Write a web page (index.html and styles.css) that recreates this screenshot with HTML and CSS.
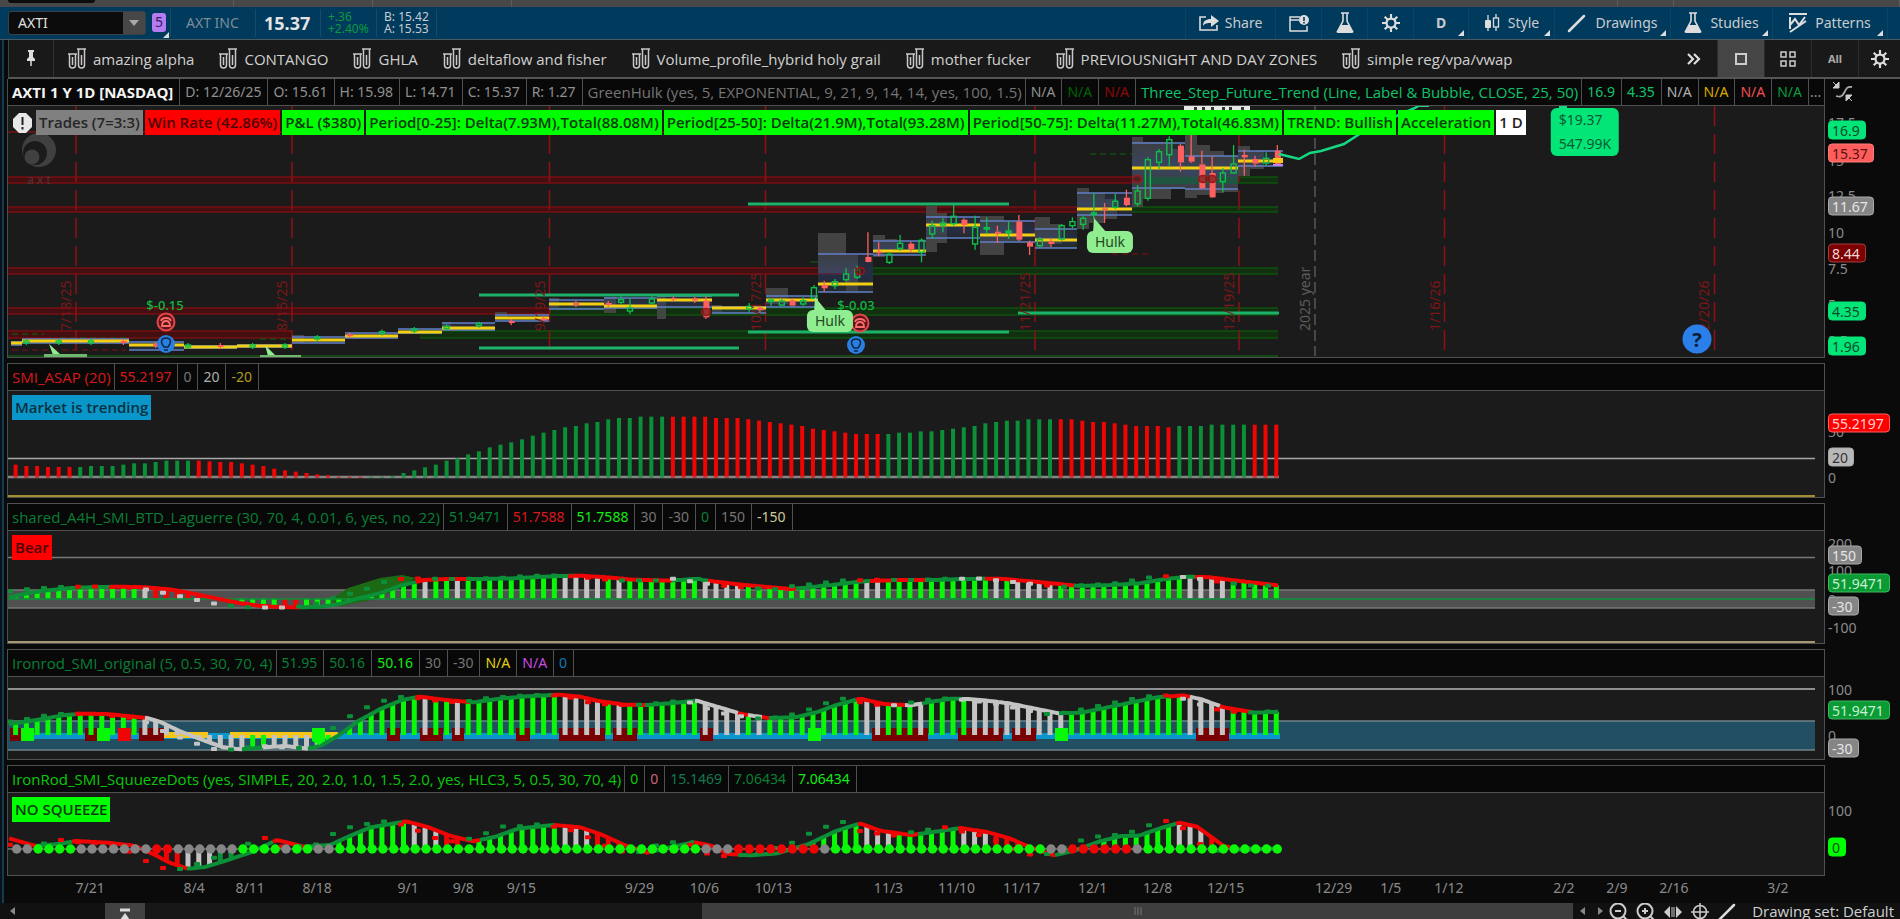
FILE: index.html
```html
<!DOCTYPE html>
<html lang="en">
<head>
<meta charset="utf-8">
<title>AXTI Charts</title>
<link rel="stylesheet" href="styles.css">
</head>
<body>
<svg class="defs" aria-hidden="true">
  <symbol id="tubes" viewBox="0 0 18 22"><g fill="none" stroke="#c8c8c8" stroke-width="1.5"><path d="M0 6h9M1.500 6v11a3 3 0 0 0 6 0V6M4.500 9v8"/><path d="M9 1h9M10.500 1v16a3 3 0 0 0 6 0V1M13.500 7v10"/></g></symbol>
  <symbol id="flask" viewBox="0 0 18 22"><path d="M5 1h8M7 1v8L1.500 19.500h15L11 9V1" fill="none" stroke="#ddd" stroke-width="1.600"/><path d="M5 13h8l4 8H1z" fill="#ddd"/></symbol>
  <symbol id="gear" viewBox="0 0 20 20"><circle cx="10" cy="10" r="5" fill="none" stroke="#ddd" stroke-width="2.500"/><path d="M10 0v5M10 15v5M0 10h5M15 10h5M3 3l3.500 3.500M13.500 13.500L17 17M17 3l-3.500 3.500M6.500 13.500L3 17" stroke="#ddd" stroke-width="2.400"/></symbol>
  <symbol id="pen" viewBox="0 0 20 20"><path d="M2 18L17 3" stroke="#ddd" stroke-width="2.500" stroke-linecap="round"/></symbol>
</svg>

<div class="tabs"><span class="tab tab-live"></span><span class="tab"></span><span class="tab"></span><span class="tab"></span><span class="tab tab-wide"></span><span class="tab tab-end"></span><span class="tab tab-last"></span></div>

<header class="toolbar">
  <div class="symbol-box"><input aria-label="Symbol" value="AXTI"><button aria-label="Symbol list"><svg width="10" height="6"><path d="M0 0h10L5 6z" fill="#aaa"/></svg></button></div>
  <button class="link-color corner">5</button>
  <div class="quote name">AXT INC</div>
  <div class="quote last">15.37</div>
  <div class="quote change"><span>+.36</span><span>+2.40%</span></div>
  <div class="quote bidask"><span>B: 15.42</span><span>A: 15.53</span></div>
  <div class="tools">
    <button class="tool share"><svg width="20" height="16" viewBox="0 0 20 16"><path d="M7 2H1v13h17v-5" fill="none" stroke="#ddd" stroke-width="1.600"/><path d="M4 11c0-5 3-7 8-7V0l8 6-8 6V8c-4 0-6 0-8 3z" fill="#ddd"/></svg>Share</button>
    <button class="tool icon" aria-label="Alerts"><svg width="20" height="17" viewBox="0 0 20 17"><path d="M11 2H1v14h17v-5M1 5h9" fill="none" stroke="#ddd" stroke-width="1.500"/><circle cx="15" cy="5" r="5" fill="#ddd"/><path d="M15 2v4M15 7v1.500" stroke="#003a5c" stroke-width="1.600"/></svg></button>
    <button class="tool icon" aria-label="Lab"><svg width="18" height="22"><use href="#flask"/></svg></button>
    <button class="tool icon" aria-label="Settings"><svg width="18" height="18"><use href="#gear"/></svg></button>
    <button class="tool day corner">D</button>
    <button class="tool style corner"><svg width="16" height="18" viewBox="0 0 16 18"><path d="M4 1v16M12 0v17" stroke="#ddd" stroke-width="1.300"/><rect x="1" y="6" width="6" height="8" rx="1" fill="#ddd"/><rect x="9.500" y="4" width="5" height="9" fill="#003a5c" stroke="#ddd" stroke-width="1.300"/></svg>Style</button>
    <button class="tool drawings corner"><svg width="20" height="20"><use href="#pen"/></svg>Drawings</button>
    <button class="tool studies corner"><svg width="18" height="22"><use href="#flask"/></svg>Studies</button>
    <button class="tool patterns corner"><svg width="18" height="20" viewBox="0 0 18 20"><path d="M0 1h18M1 4v8l5-6 4 6 6-8M1 19L17 8M1 16v-3" fill="none" stroke="#ddd" stroke-width="2"/></svg>Patterns</button>
  </div>
</header>

<nav class="bookmarks">
  <button class="pin" aria-label="Pin"><svg width="10" height="17" viewBox="0 0 10 17"><path d="M2 0h6v2H7v5l2 2v2H1V9l2-2V2H2z" fill="#ddd"/><path d="M5 10v6" stroke="#ddd" stroke-width="1.500"/></svg></button>
  <div class="sets">
    <button><svg width="18" height="22"><use href="#tubes"/></svg>amazing alpha</button>
    <button><svg width="18" height="22"><use href="#tubes"/></svg>CONTANGO</button>
    <button><svg width="18" height="22"><use href="#tubes"/></svg>GHLA</button>
    <button><svg width="18" height="22"><use href="#tubes"/></svg>deltaflow and fisher</button>
    <button><svg width="18" height="22"><use href="#tubes"/></svg>Volume_profile_hybrid holy grail</button>
    <button><svg width="18" height="22"><use href="#tubes"/></svg>mother fucker</button>
    <button><svg width="18" height="22"><use href="#tubes"/></svg>PREVIOUSNIGHT AND DAY ZONES</button>
    <button><svg width="18" height="22"><use href="#tubes"/></svg>simple reg/vpa/vwap</button>
  </div>
  <div class="views">
    <button class="more" aria-label="More"><svg width="14" height="12" viewBox="0 0 14 12"><path d="M1 1l5 5-5 5M7 1l5 5-5 5" fill="none" stroke="#ddd" stroke-width="2.200"/></svg></button>
    <button class="on" aria-label="Single"><svg width="12" height="12"><rect x="1" y="1" width="10" height="10" fill="none" stroke="#ccc" stroke-width="2"/></svg></button>
    <button aria-label="Grid"><svg width="16" height="16"><path d="M1 1h5v5H1zM10 1h5v5h-5zM1 10h5v5H1zM10 10h5v5h-5z" fill="none" stroke="#ccc" stroke-width="1.500"/></svg></button>
    <button class="all">All</button>
    <button aria-label="Chart settings"><svg width="18" height="18"><use href="#gear"/></svg></button>
  </div>
</nav>

<main class="charts">
  <section class="panel">
    <div class="frame">
      <div class="legend">
        <span class="strong">AXTI 1 Y 1D [NASDAQ]</span><span>D: 12/26/25</span><span>O: 15.61</span><span>H: 15.98</span><span>L: 14.71</span><span>C: 15.37</span><span>R: 1.27</span><span class="study dim">GreenHulk (yes, 5, EXPONENTIAL, 9, 21, 9, 14, 14, yes, 100, 1.5)</span><span>N/A</span><span class="c-forest">N/A</span><span class="c-maroon">N/A</span><span class="study c-mint">Three_Step_Future_Trend (Line, Label &amp; Bubble, CLOSE, 25, 50)</span><span class="c-mint">16.9</span><span class="c-mint">4.35</span><span class="c-silver">N/A</span><span class="c-gold">N/A</span><span class="c-coral">N/A</span><span class="c-green">N/A</span><span class="rest">...</span>
      </div>
      <div class="plot" id="price"><svg class="price-svg" viewBox="8 107 1816 251" preserveAspectRatio="none"></svg>
        <div class="labels"><svg class="warn" width="19" height="20" viewBox="0 0 19 20"><path d="M6 0h7l6 6v8l-6 6H6l-6-6V6z" fill="#e8e8e8"/><path d="M9.500 4v8M9.500 14v2.500" stroke="#222" stroke-width="2"/></svg><b class="gray">Trades (7=3:3)</b><b class="red">Win Rate (42.86%)</b><b>P&amp;L ($380)</b><b>Period[0-25]: Delta(7.93M),Total(88.08M)</b><b>Period[25-50]: Delta(21.9M),Total(93.28M)</b><b>Period[50-75]: Delta(11.27M),Total(46.83M)</b><b>TREND: Bullish</b><b>Acceleration</b><b class="white">1 D</b></div>
      </div>
    </div>
    <div class="scale" data-top="80"><svg class="swap" width="20" height="20" viewBox="0 0 20 20"><path d="M0 0l6 6M6 0v6H0z" fill="#ccc" stroke="#ccc"/><path d="M19 5c-5-1-6 2-8 6s-4 4-8 3" fill="none" stroke="#aaa" stroke-width="1.800"/><path d="M19 19l-4-4M13 19v-6h6z" fill="#ccc" stroke="#ccc"/></svg></div>
  </section>

  <section class="panel">
    <div class="frame">
      <div class="legend"><span class="study c-red">SMI_ASAP (20)</span><span class="c-red">55.2197</span><span class="dim">0</span><span class="c-silver">20</span><span class="c-olive">-20</span><i></i></div>
      <div class="plot" id="trend"><svg class="trend-svg" viewBox="8 391 1816 106" preserveAspectRatio="none"></svg><div class="labels"><b class="blue">Market is trending</b></div></div>
    </div>
    <div class="scale" data-top="363"></div>
  </section>

  <section class="panel">
    <div class="frame">
      <div class="legend"><span class="study c-deep">shared_A4H_SMI_BTD_Laguerre (30, 70, 4, 0.01, 6, yes, no, 22)</span><span class="c-deep">51.9471</span><span class="c-red">51.7588</span><span class="c-lime">51.7588</span><span class="dim">30</span><span class="dim">-30</span><span class="c-deep">0</span><span class="dim">150</span><span class="c-cream">-150</span><i></i></div>
      <div class="plot" id="laguerre"><svg class="laguerre-svg" viewBox="8 531 1816 112" preserveAspectRatio="none"></svg><div class="labels"><b class="red">Bear</b></div></div>
    </div>
    <div class="scale" data-top="503"></div>
  </section>

  <section class="panel">
    <div class="frame">
      <div class="legend"><span class="study c-deep">Ironrod_SMI_original (5, 0.5, 30, 70, 4)</span><span class="c-deep">51.95</span><span class="c-deep">50.16</span><span class="c-lime">50.16</span><span class="dim">30</span><span class="dim">-30</span><span class="c-yellow">N/A</span><span class="c-violet">N/A</span><span class="c-azure">0</span><i></i></div>
      <div class="plot" id="ironrod"><svg class="ironrod-svg" viewBox="8 677 1816 82" preserveAspectRatio="none"></svg></div>
    </div>
    <div class="scale" data-top="649"></div>
  </section>

  <section class="panel">
    <div class="frame">
      <div class="legend"><span class="study c-lime2">IronRod_SMI_SquuezeDots (yes, SIMPLE, 20, 2.0, 1.0, 1.5, 2.0, yes, HLC3, 5, 0.5, 30, 70, 4)</span><span class="c-lime2">0</span><span class="c-rose">0</span><span class="c-sea">15.1469</span><span class="c-deep">7.06434</span><span class="c-lime">7.06434</span><i></i></div>
      <div class="plot" id="squeeze"><svg class="squeeze-svg" viewBox="8 793 1816 82" preserveAspectRatio="none"></svg><div class="labels"><b>NO SQUEEZE</b></div></div>
    </div>
    <div class="scale" data-top="765"></div>
  </section>

  <div class="dates" id="dates"></div>
</main>

<footer class="bottom">
  <button class="step" aria-label="Left"><svg width="5" height="8"><path d="M5 0v8L0 4z" fill="#888"/></svg></button>
  <button class="jump" aria-label="Jump"><svg width="14" height="14" viewBox="0 0 14 14"><path d="M2 2h10" stroke="#ddd" stroke-width="3"/><path d="M7 5l5 7H2z" fill="#ddd"/></svg></button>
  <div class="track"><div class="thumb"><svg width="8" height="8"><path d="M1 0v8M4 0v8M7 0v8" stroke="#777"/></svg></div></div>
  <div class="steps"><svg width="5" height="8"><path d="M5 0v8L0 4z" fill="#888"/></svg><svg width="5" height="8"><path d="M0 0v8l5-4z" fill="#888"/></svg></div>
  <div class="zooms">
    <button aria-label="Zoom out"><svg width="20" height="20" viewBox="0 0 20 20"><circle cx="9" cy="9" r="7.500" fill="none" stroke="#ccc" stroke-width="2"/><path d="M6 9h6M14.500 14.500L19 19" stroke="#ccc" stroke-width="2"/></svg></button>
    <button aria-label="Zoom in"><svg width="20" height="20" viewBox="0 0 20 20"><circle cx="9" cy="9" r="7.500" fill="none" stroke="#ccc" stroke-width="2"/><path d="M6 9h6M9 6v6M14.500 14.500L19 19" stroke="#ccc" stroke-width="2"/></svg></button>
    <button aria-label="Expand"><svg width="20" height="20" viewBox="0 0 20 20"><path d="M7 4v12L1 10zM13 4v12l6-6z" fill="#ccc"/><path d="M9 5v10M11 5v10" stroke="#ccc"/></svg></button>
    <button aria-label="Crosshair"><svg width="20" height="20" viewBox="0 0 20 20"><circle cx="10" cy="10" r="6.500" fill="none" stroke="#ccc" stroke-width="1.600"/><path d="M10 1v18M1 10h18" stroke="#ccc" stroke-width="1.500"/></svg></button>
    <button aria-label="Draw"><svg width="20" height="20"><use href="#pen"/></svg></button>
  </div>
  <button class="drawing-set">Drawing set: Default</button>
</footer>
<script src="chart.js"></script>
</body>
</html>
```
FILE: styles.css
```css
* { box-sizing: border-box; }
body { margin: 0; min-height: 100vh; overflow: hidden; display: flex; flex-direction: column; background: linear-gradient(to right, #0c1216 0 2px, #123a52 2px 4px, #0a0a0a 4px); color: #d0d0d0; font: 14px/20px "Noto Sans", sans-serif; }
button, input { font: inherit; color: inherit; background: none; border: 0; margin: 0; padding: 0; }
button { display: flex; align-items: center; justify-content: center; white-space: nowrap; }
svg { display: block; flex: none; }
.defs { width: 0; height: 0; position: absolute; }

.tabs { height: 7px; display: flex; background: #484848; padding-left: 8px; overflow: hidden; }
.tab { width: 139px; border-right: 1px solid #5c5c5c; }
.tab-live { width: 87px; height: 3px; background: #0c0c0c; border-radius: 0 0 3px 3px; border-right: 0; }
.tab-wide { flex: 1; }
.tab-end { width: 56px; }
.tab-last { width: 226px; }

.toolbar { height: 33px; display: flex; align-items: center; background: #003a5c; border-bottom: 1px solid #4a5a62; padding-left: 8px; color: #c8ccd0; }
.symbol-box { display: flex; width: 138px; height: 24px; background: #0c0c0c; border: 1px solid #35424a; border-radius: 3px; }
.symbol-box input { flex: 1; min-width: 0; padding-left: 9px; color: #e0e0e0; }
.symbol-box button { width: 22px; background: #474747; }
.corner { position: relative; }
.corner::after { content: ""; position: absolute; right: 4px; bottom: 3px; border: 3px solid; border-color: transparent #ddd #ddd transparent; }
.link-color { width: 14px; height: 19px; margin: 0 4px 2px 6px; background: #b57bf0; border-radius: 3px; color: #3b1a66; }
.link-color::after { right: -3px; bottom: -6px; }
.quote { height: 28px; border-left: 1px solid #1b4a68; display: flex; align-items: center; }
.name { width: 85px; padding-left: 15px; color: #7d8d98; }
.last { width: 65px; padding-left: 8px; font-size: 18px; font-weight: 700; color: #e4e4e4; }
.change, .bidask { flex-direction: column; align-items: flex-start; justify-content: center; font-size: 12px; line-height: 12px; padding-left: 7px; }
.change { width: 56px; color: #0a9b3c; }
.bidask { width: 61px; border-right: 1px solid #1b4a68; }
.tools { margin-left: auto; display: flex; height: 100%; padding-right: 12px; }
.tool { height: 100%; gap: 8px; border-left: 1px solid #0e4464; }
.share { width: 90px; gap: 6px; }
.icon { width: 46px; }
.day { width: 55px; font-weight: 700; }
.style { width: 86px; }
.drawings { width: 116px; }
.studies { width: 102px; }
.patterns { width: 116px; border-right: 1px solid #0e4464; }

.bookmarks { height: 39px; display: flex; margin-left: 8px; background: #191919; border-bottom: 2px solid #555; border-left: 1px solid #444; }
.pin { width: 45px; border-right: 1px solid #333; }
.sets { display: flex; gap: 25px; padding-left: 14px; min-width: 0; overflow: hidden; font-family: "Open Sans", sans-serif; font-size: 15px; }
.sets button { gap: 7px; }
.views { display: flex; margin-left: auto; }
.views button { width: 47px; border-left: 1px solid #2c2c2c; }
.views .more { border: 0; }
.views .on { background: #454545; }
.views button:last-child { width: 42px; }
.views .all { font-size: 11px; font-weight: 700; color: #aaa; }

.charts { display: flex; flex-direction: column; margin-left: 7px; background: #0a0a0a; }
.panel { display: flex; margin-bottom: 5px; }
.panel:nth-of-type(5) { margin-bottom: 0; }
.frame { flex: 1; min-width: 0; border: 1px solid #505050; }
.panel:first-child .frame { border-top: 0; }
.scale { width: 75px; position: relative; }
.legend { height: 27px; display: flex; background: #080808; border-bottom: 1px solid #505050; overflow: hidden; white-space: nowrap; color: #909090; }
.legend span { flex: none; padding: 3px 6px 0 5px; border-left: 1px solid #505050; }
.legend span:first-child { border-left: 0; padding-left: 4px; }
.legend i { border-left: 1px solid #505050; }
.legend .study, .legend .strong, .labels b { font-family: "Open Sans", sans-serif; font-size: 15px; }
.legend .study { padding-right: 3px; }
.legend .strong { color: #f4f4f4; font-weight: 700; }
.legend .rest { padding: 3px 0 0 1px; }
.legend .dim { color: #757575; }
.c-forest { color: #006400; }
.c-maroon { color: #8f0808; }
.c-mint { color: #0fc26b; }
.c-silver { color: #b0b0b0; }
.c-gold { color: #d8a800; }
.c-coral { color: #f05050; }
.c-green { color: #0a9b3c; }
.c-red { color: #d81818; }
.c-olive { color: #b09a1a; }
.c-deep { color: #0a7f35; }
.c-lime { color: #12ea12; }
.c-lime2 { color: #08c808; }
.c-cream { color: #d0c898; }
.c-yellow { color: #e0d010; }
.c-violet { color: #c84be0; }
.c-azure { color: #0f7ab8; }
.c-rose { color: #c86478; }
.c-sea { color: #127a50; }

.plot { position: relative; background: #1b1b1b; overflow: hidden; }
.plot > svg { width: 100%; }
.price-svg { height: 251px; }
.trend-svg { height: 106px; }
.laguerre-svg { height: 112px; }
.ironrod-svg { height: 82px; }
.squeeze-svg { height: 82px; }
.labels { position: absolute; left: 4px; top: 4px; display: flex; gap: 2px; white-space: nowrap; }
.labels b { height: 25px; padding: 2px 3px 0; background: #00ff00; color: #0a3a0a; font-weight: 600; }
.labels .warn { margin: 3px 2px 0 1px; }
.labels .gray { background: #808080; color: #262626; }
.labels .red { background: #ff0000; color: #4a0606; }
.labels .blue { background: #0a96c8; color: #08303f; }
.labels .white { background: #fff; color: #222; }

.note { position: absolute; transform: translate(-50%, -50%); white-space: nowrap; }
.note.vertical { writing-mode: vertical-rl; rotate: 180deg; transform: translate(50%, 100%); line-height: 16px; }
.note.expiry { color: #7c1618; }
.note.year { color: #5c5c5c; }
.note.pl { color: #12b840; font-size: 13px; font-weight: 500; }
.note.hulk { padding: 1px 8px; background: #90ee90; color: #234a23; border-radius: 6px; }
.note.help { width: 29px; height: 29px; border-radius: 50%; background: #2a7fe8; color: #0c2038; font-size: 20px; line-height: 29px; font-weight: 700; text-align: center; }
.note.target { padding: 0 8px; line-height: 24px; background: #04e578; color: #0a5a33; border-radius: 6px; }
.note.mark { color: #4c3838; font-size: 12px; }
.tick { position: absolute; left: 3px; transform: translateY(-50%); color: #8a8a8a; }
.tick.badge { padding: 0 5px 0 3px; line-height: 17px; border: 1px solid #aaa; border-radius: 4px; }
.tick.mint { background: #04e578; border-color: #04e578; color: #0a4a2b; }
.tick.salmon { background: #ff5c5c; border-color: #ff7c7c; color: #5a1010; }
.tick.grayb { background: #858585; color: #e6e6e6; }
.tick.blood { background: #7c0000; border-color: #a04040; color: #f0d8d8; }
.tick.redb { background: #ff0000; border-color: #ff6060; color: #ffd0d0; }
.tick.light { background: #b8b8b8; color: #333; }
.tick.greenb { background: #0a9b34; border-color: #40b860; color: #c8f0d0; }
.tick.limeb { background: #00ff00; border-color: #00ff00; color: #0a4a0a; }
.swap { position: absolute; left: 8px; top: 3px; }
.dates { height: 27px; position: relative; margin: 0 75px 0 1px; color: #8a8a8a; }
.dates span { position: absolute; top: 2px; transform: translateX(-50%); }

.bottom { height: 16px; display: flex; overflow: hidden; padding-left: 8px; background: #111; }
.step { width: 8px; }
.jump { width: 40px; margin-left: 89px; background: #424242; align-items: flex-start; padding-top: 5px; }
.track { flex: 1; background: #171717; }
.thumb { width: 61%; height: 100%; margin-left: auto; background: #3e3e3e; display: flex; align-items: center; justify-content: center; }
.steps { width: 36px; display: flex; align-items: center; justify-content: space-around; }
.zooms { display: flex; gap: 7px; height: 18px; }
.drawing-set { height: 16px; margin: 0 6px 0 15px; font-family: "Open Sans", sans-serif; font-size: 15px; }
```
FILE: chart.js
```js
const NS = 'http://www.w3.org/2000/svg';
const G = '#0b9038', R = '#f00505', W = '#c4c4c4', L = '#08f808', D = '#780000', Y = '#f5c518';
const X0 = 15.6, STEP = 10.775;
const barX = i => X0 + STEP * i;

function el(parent, name, attrs) {
  const node = document.createElementNS(NS, name);
  for (const k in attrs) node.setAttribute(k, attrs[k]);
  parent.appendChild(node);
  return node;
}
const rect = (s, x, y, w, h, fill, more) => el(s, 'rect', { x, y, width: w, height: h, fill, ...more });
const line = (s, x1, y1, x2, y2, stroke, w = 1, more) => el(s, 'line', { x1, y1, x2, y2, stroke, 'stroke-width': w, ...more });
const svg = id => document.querySelector('#' + id + ' svg');

/* "g12w3" becomes twelve g entries followed by three w entries */
function runs(text) {
  const out = [];
  for (const [, c, n] of text.matchAll(/([a-z.])(\d+)/g)) for (let k = 0; k < +n; k++) out.push(c);
  return out;
}
const COLORS = { g: L, w: W, r: R, d: G, x: '#858585', '.': null };

/* Curve samples: two halves of [x, y] in plot units of 1/2.24 by 1/3 pixel */
function curve(top, left, right) {
  const conv = (o, a) => a.map(p => [o + p[0] / 2.24, top + p[1] / 3]);
  return conv(0, left).concat(conv(630, right));
}
function at(points, x) {
  if (x <= points[0][0]) return points[0][1];
  for (let i = 1; i < points.length; i++) {
    const [x1, y1] = points[i - 1], [x2, y2] = points[i];
    if (x <= x2) return y1 + (y2 - y1) * (x - x1) / (x2 - x1 || 1);
  }
  return points[points.length - 1][1];
}
function strokeCurve(s, points, spans, width) {
  spans.forEach(([from, c], k) => {
    const to = k + 1 < spans.length ? spans[k + 1][0] : 1278;
    let d = '';
    for (let x = from; x <= to; x += 3) d += (d ? 'L' : 'M') + x + ' ' + at(points, x).toFixed(1);
    el(s, 'path', { d: d + 'L' + to + ' ' + at(points, to).toFixed(1), fill: 'none', stroke: c, 'stroke-width': width });
  });
}
function leadDots(s, points, spans, lead, gain, lo) {
  for (let x = 10; x < 1276; x += 17) {
    let y = at(points, x + lead);
    y += (y - at(points, x)) * gain;
    let c = G;
    for (const sp of spans) if (x + lead >= sp[0]) c = sp[1];
    rect(s, x - 3, Math.min(y, lo) - 2, 6, 4, c, { rx: 1 });
  }
}

/* Price */
(function () {
  const s = svg('price');
  const band = (x1, x2, y1, y2, red) => {
    rect(s, x1, y1, x2 - x1, y2 - y1, red ? '#430f10' : '#10300f');
    line(s, x1, y1, x2, y1, red ? '#780f12' : '#0f520f', 1.5);
    line(s, x1, y2, x2, y2, red ? '#780f12' : '#0f520f', 1.5);
  };
  band(8, 1136, 178, 184, true); band(1140, 1278, 178, 184);
  band(8, 1080, 208, 213, true); band(1132, 1278, 208, 213);
  band(8, 862, 269, 275, true); band(873, 1278, 269, 275);
  band(8, 549, 309, 315, true); band(549, 1278, 309, 316);
  band(8, 292, 332, 339, true); band(420, 1278, 332, 339);
  rect(s, 8, 356, 1270, 2, '#164516');
  line(s, 8, 133, 1238, 133, '#a01010', 1);
  line(s, 12, 335, 44, 335, '#0f660f', 1, { 'stroke-dasharray': '6 4' });
  line(s, 60, 339, 126, 339, '#0f660f', 1, { 'stroke-dasharray': '6 4' });
  line(s, 12, 351, 126, 351, '#801010', 1, { 'stroke-dasharray': '6 4' });
  line(s, 260, 340, 292, 340, '#0f660f', 1, { 'stroke-dasharray': '6 4' });
  line(s, 1090, 155, 1140, 155, '#0f660f', 1, { 'stroke-dasharray': '6 4' });
  line(s, 810, 263, 850, 263, '#0f660f');
  line(s, 1112, 255, 1152, 255, '#801010', 1, { 'stroke-dasharray': '6 4' });
  [76, 292, 549.5, 765.5, 1035, 1239, 1444.5, 1714.5].forEach(x => line(s, x, 107, x, 353, '#8f1013', 1.5, { 'stroke-dasharray': '20 8' }));
  line(s, 1315, 107, 1315, 357, '#585858', 1.5, { 'stroke-dasharray': '11 5' });

  /* profile histograms */
  [[818, 234, 28, 40], [846, 256, 12, 36], [873, 236, 12, 22], [885, 240, 12, 12], [926, 207, 11, 46], [937, 214, 10, 30], [980, 217, 24, 39], [1004, 222, 18, 20],
   [1035, 218, 15, 31], [1050, 225, 12, 20], [1077, 189, 12, 41], [1089, 194, 16, 30], [1105, 200, 12, 20], [1132, 138, 11, 70], [1143, 143, 28, 57], [1171, 150, 14, 40],
   [1185, 136, 12, 63], [1197, 146, 13, 50], [1210, 152, 14, 42], [1224, 157, 14, 36], [1238, 147, 12, 30], [1250, 152, 14, 18],
   [657, 296, 9, 24], [712, 306, 10, 8], [766, 289, 22, 16], [549, 299, 10, 10], [604, 298, 12, 16], [495, 313, 12, 7], [292, 336, 12, 8], [442, 323, 9, 6]]
    .forEach(b => rect(s, ...b, '#4a4a4a', { opacity: .85 }));
  const grad = el(el(s, 'defs', {}), 'linearGradient', { id: 'va', x1: 0, y1: 0, x2: 0, y2: 1 });
  el(grad, 'stop', { offset: 0, 'stop-color': '#343840' });
  el(grad, 'stop', { offset: .5, 'stop-color': '#2c4680' });
  el(grad, 'stop', { offset: 1, 'stop-color': '#343840' });
  /* value areas: from, to, point of control, high, low */
  [[11, 22, 344, 343, 346], [22, 129, 342, 340, 344], [129, 184, 346, 343, 351], [184, 237, 348, 347, 349], [237, 292, 347, 346, 348], [292, 345, 341, 338, 344],
   [345, 398, 337, 334, 339], [398, 442, 333, 330, 334], [442, 495, 329, 324, 331], [495, 549, 319, 316, 322], [549, 604, 305, 301, 310], [604, 657, 307, 299, 309],
   [657, 712, 301, 297, 308], [712, 766, 309, 308, 314], [766, 818, 301, 297, 308], [818, 873, 285, 255, 293], [873, 926, 252, 242, 256], [926, 980, 226, 218, 239],
   [980, 1035, 236, 222, 243], [1035, 1077, 241, 230, 249], [1077, 1132, 210, 194, 216], [1132, 1185, 169, 144, 189], [1185, 1238, 169, 157, 190], [1238, 1283, 162, 152, 167]]
    .forEach(([a, b, p, h, l]) => {
      rect(s, a, h, b - a, l - h, 'url(#va)', { opacity: .45 });
      line(s, a, h, b, h, '#6080c8', 1.5);
      line(s, a, l, b, l, '#6080c8', 1.5);
      line(s, a, p, b, p, '#f2cf10', 3);
    });
  rect(s, 1146, 178, 92, 7, '#1a5a40', { opacity: .8 });

  const candle = (x, wt, bt, bb, wb, up) => {
    const c = up ? '#0fbf4a' : '#ff5f5f';
    line(s, x, wt, x, bt, c, 1.3); line(s, x, bb, x, wb, c, 1.3);
    rect(s, x - 2.5, bt, up ? 5 : 6, Math.max(bb - bt, 1.5), up ? 'none' : c, up ? { stroke: c, 'stroke-width': 1.4 } : {});
  };
  /* left side: small candles hugging the control line */
  for (let i = 0; i < 57; i++) {
    const x = barX(i);
    const base = x < 130 ? 343 : x < 184 ? 346 : x < 292 ? 347 : x < 549 ? 341 - (x - 292) * .082 : 305;
    const up = [1, 2, 4, 7, 8, 11, 14, 16, 18, 20, 22, 25, 26, 28, 30, 33, 34, 37, 40, 43, 44, 48, 50, 53, 54].includes(i);
    if (i % 3 === 1) candle(x, base - 3, base - 1, base + 1, base + 3, up);
  }
  [[-20, 592, 602, 610, 618, 1], [0, 598, 626, 636, 645, 1], [49, 590, 600, 612, 618, 1], [97, 592, 597, 601, 606, 0], [145, 594, 598, 604, 612, 0], [170, 590, 605, 655, 660, 0], [267, 612, 622, 630, 638, 1], [291, 618, 626, 634, 640, 0],
   [316, 598, 603, 606, 620, 1], [340, 600, 606, 618, 622, 1], [363, 598, 604, 620, 622, 0], [388, 595, 605, 615, 620, 1], [412, 558, 566, 598, 600, 1], [435, 545, 558, 568, 578, 0], [459, 540, 548, 560, 570, 1],
   [484, 508, 525, 542, 548, 1], [509, 500, 512, 535, 540, 1], [533, 400, 474, 489, 490, 0], [557, 430, 458, 462, 472, 0], [581, 460, 466, 490, 495, 1], [605, 408, 433, 448, 455, 1], [629, 428, 434, 450, 460, 0], [653, 418, 424, 460, 490, 1],
   [677, 365, 380, 405, 420, 1], [701, 358, 372, 378, 400, 1], [725, 318, 352, 374, 380, 1], [748, 358, 362, 378, 403, 0], [773, 350, 385, 435, 452, 1], [799, 355, 386, 390, 405, 1], [823, 380, 398, 404, 432, 0], [848, 368, 396, 400, 420, 1],
   [871, 348, 368, 422, 426, 0], [895, 425, 430, 443, 468, 0], [918, 415, 422, 440, 446, 1], [943, 420, 428, 435, 445, 0], [967, 375, 380, 420, 425, 1], [991, 355, 368, 380, 388, 1], [1015, 350, 358, 376, 392, 1], [1039, 282, 342, 346, 360, 1],
   [1063, 312, 328, 332, 372, 0], [1087, 285, 307, 325, 330, 1], [1112, 272, 296, 318, 322, 0], [1137, 258, 276, 314, 322, 1], [1160, 175, 182, 298, 305, 1], [1185, 150, 158, 190, 210, 1], [1208, 112, 122, 167, 200, 1], [1233, 135, 140, 190, 218, 0],
   [1257, 108, 172, 188, 192, 0], [1281, 155, 196, 268, 270, 0], [1304, 172, 222, 295, 297, 0], [1328, 208, 222, 248, 280, 1], [1352, 138, 195, 222, 225, 1], [1376, 152, 168, 175, 230, 0], [1400, 170, 180, 194, 202, 0], [1425, 160, 178, 192, 200, 1], [1450, 138, 155, 195, 200, 0]]
    .forEach(c => candle(630 + c[0] / 2.24, ...c.slice(1, 5).map(y => 100 + y / 3), c[5]));
  rect(s, 1273, 159, 10, 5, Y);
  line(s, 1273, 166, 1283, 166, '#c080f0', 2);
  [[1137, 180], [1203, 180], [1212, 180], [706, 313], [860, 272]].forEach(([cx, cy]) => el(s, 'ellipse', { cx, cy, rx: 4.5, ry: 3.5, fill: '#5a1010', 'fill-opacity': .6, stroke: '#a01515', 'stroke-width': 1.5 }));

  [[479, 739, 296], [479, 739, 349], [748, 1009, 205], [748, 1009, 333], [1018, 1279, 314]].forEach(([a, b, y]) => line(s, a, y, b, y, '#1cb269', 3));
  el(s, 'path', { d: 'M1279 155L1299 160L1310 154L1321 152L1344 145L1358 136L1385 122L1415 109L1420 106', fill: 'none', stroke: '#15d880', 'stroke-width': 2.5 });
  line(s, 1416, 107, 1429, 107, '#15d880', 2);
  rect(s, 1184, 107, 66, 4, '#e8e8e8');
  [1194, 1202, 1211, 1222, 1229, 1241].forEach(x => rect(s, x, 108, 3, 3, '#333'));

  /* speech pointers and markers */
  el(s, 'path', { d: 'M815 298l-1 16h14zM1094 219l-1 15h14zM49 345l4 11h8zM265 346l3 11h8z', fill: '#90ee90' });
  rect(s, 44, 355, 43, 3, '#6eb86e'); rect(s, 260, 356, 41, 2, '#6eb86e');
  rect(s, 1559, 107, 8, 3, '#15d880');
  [[166, 323], [860, 324]].forEach(([x, y]) => {
    el(s, 'circle', { cx: x, cy: y, r: 8.5, fill: '#5a1518', stroke: '#e8454a', 'stroke-width': 2 });
    el(s, 'path', { d: `M${x - 5} ${y - 1}c1-4 9-4 10 0M${x - 4} ${y + 4}c0-4 2-5 4-5s4 1 4 5z`, fill: 'none', stroke: '#ff6a6a', 'stroke-width': 1.8 });
  });
  [[166, 345], [856, 346]].forEach(([x, y]) => {
    el(s, 'circle', { cx: x, cy: y, r: 9, fill: '#2a7fe0' });
    el(s, 'path', { d: `M${x - 2} ${y + 3}c-4-5-3-9 2-9s6 4 2 9zM${x - 2} ${y + 6}h4`, fill: 'none', stroke: '#0c2848', 'stroke-width': 1.5 });
  });
  el(s, 'circle', { cx: 39, cy: 151, r: 17, fill: '#404040' });
  el(s, 'circle', { cx: 35, cy: 154, r: 12, fill: '#1b1b1b' });
  el(s, 'circle', { cx: 32, cy: 158, r: 7.5, fill: '#404040' });
})();

/* Histogram */
(function () {
  const s = svg('trend'), end = 1815;
  const tops = [314, 318, 318, 321, 321, 321, 321, 318, 318, 318, 314, 310, 310, 306, 302, 302, 302, 302, 304, 306, 306, 310, 314, 318, 326, 331, 335, 339, 343, 346, 350, 350, 350, 350, 350, 348,
    339, 331, 322, 314, 302, 295, 283, 274, 262, 254, 247, 238, 227, 218, 210, 202, 198, 190, 186, 178, 174, 174, 170, 170, 170, 170, 170, 170, 170, 174, 174, 174, 178, 182, 186, 190, 194, 198, 206, 210,
    214, 218, 222, 222, 222, 222, 218, 218, 214, 214, 210, 206, 202, 198, 190, 186, 182, 182, 178, 178, 178, 178, 178, 182, 186, 186, 190, 194, 198, 198, 198, 202, 198, 198, 198, 194, 194, 194, 194, 194, 194, 194];
  const cols = runs('r6d11r16d28r20d16r11d7r3');
  line(s, 8, 458.5, end, 458.5, '#a8a8a8', 1.5);
  line(s, 8, 477, 1279, 477, '#858585', 2.5);
  tops.forEach((t, i) => rect(s, barX(i) - 2, 360 + t / 3, 4, 118 - t / 3, COLORS[cols[i]]));
  line(s, 8, 477, 1279, 477, '#858585', 2, { opacity: .35 });
  line(s, 8, 496, end, 496, '#9c8e2c', 2);
})();

/* Laguerre */
(function () {
  const s = svg('laguerre'), end = 1815, zero = 598.5;
  const pts = curve(360,
    [[20, 712], [60, 700], [100, 692], [160, 684], [220, 681], [270, 680], [330, 682], [380, 688], [430, 700], [480, 714], [530, 728], [580, 737], [620, 741], [680, 742], [720, 740], [760, 732], [800, 716], [850, 700], [900, 676], [950, 660], [1000, 657], [1080, 657], [1150, 655], [1250, 648], [1300, 647], [1350, 651], [1420, 659], [1500, 662], [1568, 656]],
    [[1, 655], [60, 662], [150, 658], [200, 666], [250, 674], [300, 680], [360, 687], [400, 682], [450, 675], [520, 664], [600, 660], [680, 660], [750, 657], [830, 656], [900, 664], [960, 672], [1010, 678], [1080, 675], [1140, 670], [1200, 657], [1250, 650], [1300, 652], [1360, 662], [1450, 676]]);
  const spans = [[9, G], [112, R], [300, G], [416, R], [470, G], [574, R], [672, G], [708, R], [796, G], [870, R], [925, G], [985, R], [1074, G], [1195, R]];
  rect(s, 8, 590, end - 8, 18, '#505050');
  line(s, 8, 590, end, 590, '#777', 1.5); line(s, 8, 608, end, 608, '#777', 1.5);
  line(s, 8, 557.5, end, 557.5, '#777', 1.5);
  line(s, 8, 642, end, 642, '#a39970', 2);
  el(s, 'path', { d: 'M330 600L348 588L380 578L402 575L416 578L396 590L372 600L340 606z', fill: '#1c6a14' });
  const cols = runs('g12w1r8g4r2g11w1g2w1g9w4g1w1g7w4g11w2g10w1g1w4g12w4g5');
  cols.forEach((c, i) => {
    const y = at(pts, barX(i));
    if (Math.abs(y - zero) > 1.5) rect(s, barX(i) - 2.5, Math.min(y, zero), 5, Math.abs(y - zero), COLORS[c]);
  });
  line(s, 8, 599, end, 599, '#0b9038', 1.5);
  strokeCurve(s, pts, spans, 4);
  leadDots(s, pts, [[9, G], [95, R], [150, W], [240, G], [268, W], [310, G], [416, R], [450, G], [574, R], [640, G], [690, W], [735, R], [760, G], [870, R], [900, G], [975, W], [1060, R], [1080, G], [1180, R], [1200, W], [1225, R], [1250, G]], 18, .5, 608);
})();

/* Ironrod */
(function () {
  const s = svg('ironrod'), end = 1815, zero = 735;
  const pts = curve(620,
    [[20, 312], [60, 304], [100, 296], [140, 286], [180, 281], [240, 282], [300, 290], [330, 294], [360, 306], [400, 332], [450, 358], [500, 382], [540, 388], [590, 382], [640, 378], [690, 386], [720, 376], [760, 345], [800, 305], [850, 268], [900, 240], [940, 230], [1000, 240], [1060, 247], [1120, 236], [1180, 229], [1250, 224], [1300, 230], [1340, 243], [1400, 254], [1450, 255], [1500, 250], [1560, 242]],
    [[1, 254], [50, 252], [100, 246], [150, 242], [200, 262], [250, 282], [310, 294], [370, 292], [420, 276], [460, 256], [515, 236], [570, 252], [630, 256], [680, 244], [720, 236], [760, 237], [800, 242], [850, 250], [900, 264], [960, 280], [1010, 278], [1060, 265], [1120, 248], [1180, 232], [1240, 226], [1280, 238], [1330, 262], [1400, 278], [1450, 275]]);
  const spans = [[9, G], [76, R], [145, W], [242, G], [263, W], [308, G], [416, R], [470, G], [554, R], [645, G], [695, W], [738, R], [748, W], [762, R], [769, G], [856, R], [905, W], [922, G], [962, W], [1059, G], [1169, R], [1190, W], [1220, R], [1252, G]];
  rect(s, 8, 721, end - 8, 29, '#225062');
  line(s, 8, 721, end, 721, '#71838a', 1.5); line(s, 8, 750, end, 750, '#71838a', 1.5);
  line(s, 8, 689, end, 689, '#b8b8b8', 1.5);
  line(s, 10, 736, 1280, 736, '#0a96cc', 6);
  line(s, 163, 735, 208, 735, Y, 6); line(s, 230, 735, 338, 735, Y, 6);
  [[10, 21], [85, 97], [139, 164], [387, 400], [420, 443], [452, 464], [516, 530], [559, 605], [613, 637], [700, 713], [872, 928], [958, 1003], [1012, 1036], [1196, 1229]].forEach(([a, b]) => rect(s, a, 728, b - a, 13, D));
  const cols = runs('g12w10g2w5g9w1g2w1g9w4g1w1g7w4g1w1g9w2g3w1g4w9g11w4g5');
  cols.forEach((c, i) => {
    const y = at(pts, barX(i));
    rect(s, barX(i) - 2.5, Math.min(y, zero), 5, Math.abs(y - zero), COLORS[c]);
  });
  strokeCurve(s, pts, spans, 4);
  leadDots(s, pts, spans, 12, .35, 750);
  [[21, L], [97, L], [118, R], [312, L], [808, L], [1055, L]].forEach(([x, c]) => rect(s, x, 728, 13, 13, c));
  el(s, 'path', { d: 'M312 741h13l-6 4z', fill: L });
})();

/* Squeeze */
(function () {
  const s = svg('squeeze'), zero = 849;
  const pts = curve(620,
    [[20, 655], [80, 678], [130, 672], [170, 663], [240, 668], [300, 677], [340, 700], [380, 728], [420, 746], [460, 741], [520, 716], [560, 698], [620, 660], [680, 680], [740, 675], [780, 650], [830, 622], [910, 604], [960, 622], [1010, 648], [1060, 664], [1110, 650], [1160, 626], [1240, 615], [1300, 622], [1350, 645], [1400, 676], [1450, 698], [1500, 682], [1550, 668]],
    [[1, 700], [60, 690], [100, 676], [140, 666], [180, 676], [220, 702], [270, 706], [330, 700], [400, 672], [460, 634], [515, 610], [560, 632], [630, 645], [690, 634], [740, 624], [800, 636], [850, 655], [900, 684], [950, 706], [1000, 690], [1050, 665], [1100, 648], [1140, 647], [1180, 628], [1230, 608], [1270, 620], [1330, 678], [1370, 690], [1450, 685]]);
  const spans = [[9, R], [36, G], [72, R], [187, G], [273, R], [305, G], [402, R], [480, G], [554, R], [650, G], [694, R], [740, G], [858, R], [918, G], [958, R], [1055, G], [1176, R], [1230, G]];
  const cols = runs('.13r3w3d2.9g7w3r2.1g8w3r3.16g6w3g6w3r3.7g7w3r2.5');
  cols.forEach((c, i) => {
    const y = at(pts, barX(i));
    if (COLORS[c]) rect(s, barX(i) - 2.5, Math.min(y, zero), 5, Math.abs(y - zero), COLORS[c]);
  });
  strokeCurve(s, pts, spans, 4);
  leadDots(s, pts, spans, 14, .5, 872);
  line(s, 8, zero, 1278, zero, '#777', 1.5);
  runs('x2g4x7r2x6g4x1g2x2g34x3r8x1g20x2r6x1g13').forEach((c, i) => el(s, 'circle', { cx: barX(i) + 1, cy: zero, r: 4.7, fill: COLORS[c] }));
})();

/* Text over the price plot */
function note(x, y, cls, text) {
  const n = document.createElement('div');
  n.className = 'note ' + cls;
  n.style.left = (x - 8) / 18.16 + '%';
  n.style.top = y - 107 + 'px';
  text.split('|').forEach((t, i) => { if (i) n.append(document.createElement('br')); n.append(t); });
  document.querySelector('#price').append(n);
}
[[66, '7/18/25'], [282, '8/15/25'], [540, '9/19/25'], [756, '10/17/25'], [1025, '11/21/25'], [1229, '12/19/25'], [1435, '1/16/26'], [1704, '2/20/26']].forEach(([x, t]) => note(x, 332, 'vertical expiry', t));
note(1305, 332, 'vertical year', '2025 year');
note(165, 306, 'pl', '$-0.15');
note(856, 306, 'pl', '$-0.03');
note(830, 322, 'hulk', 'Hulk');
note(1110, 243, 'hulk', 'Hulk');
note(1697, 340, 'help', '?');
note(1585, 133, 'target', '$19.37|547.99K');
note(39, 181, 'mark', 'a x t');

/* Scales */
const scales = [
  [[124, '17.5'], [162, '15'], [197, '12.5'], [234, '10'], [270, '7.5'], [306, '5'], [342, '2.5'], [131, '16.9', 'mint'], [154, '15.37', 'salmon'], [207, '11.67', 'grayb'], [254, '8.44', 'blood'], [312, '4.35', 'mint'], [347, '1.96', 'mint']],
  [[432, '50'], [478, '0'], [423, '55.2197', 'redb'], [457, '20', 'light']],
  [[544, '200'], [571, '100'], [600, '0'], [628, '-100'], [555, '150', 'grayb'], [583, '51.9471', 'greenb'], [606, '-30', 'grayb']],
  [[690, '100'], [736, '0'], [710, '51.9471', 'greenb'], [748, '-30', 'grayb']],
  [[811, '100'], [847, '0', 'limeb']]
];
document.querySelectorAll('.scale').forEach((box, k) => scales[k].forEach(([y, t, c]) => {
  const n = document.createElement('span');
  n.className = 'tick' + (c ? ' badge ' + c : '');
  n.style.top = y - box.dataset.top + 'px';
  n.textContent = t;
  box.append(n);
}));

[[90, '7/21'], [194, '8/4'], [250, '8/11'], [317, '8/18'], [408, '9/1'], [463, '9/8'], [521, '9/15'], [639, '9/29'], [704, '10/6'], [773, '10/13'], [888, '11/3'], [956, '11/10'], [1021, '11/17'], [1092, '12/1'], [1157, '12/8'], [1225, '12/15'], [1333, '12/29'], [1390, '1/5'], [1448, '1/12'], [1563, '2/2'], [1616, '2/9'], [1673, '2/16'], [1777, '3/2']].forEach(([x, t]) => {
  const n = document.createElement('span');
  n.style.left = (x - 8) / 18.16 + '%';
  n.textContent = t;
  document.querySelector('#dates').append(n);
});
```
